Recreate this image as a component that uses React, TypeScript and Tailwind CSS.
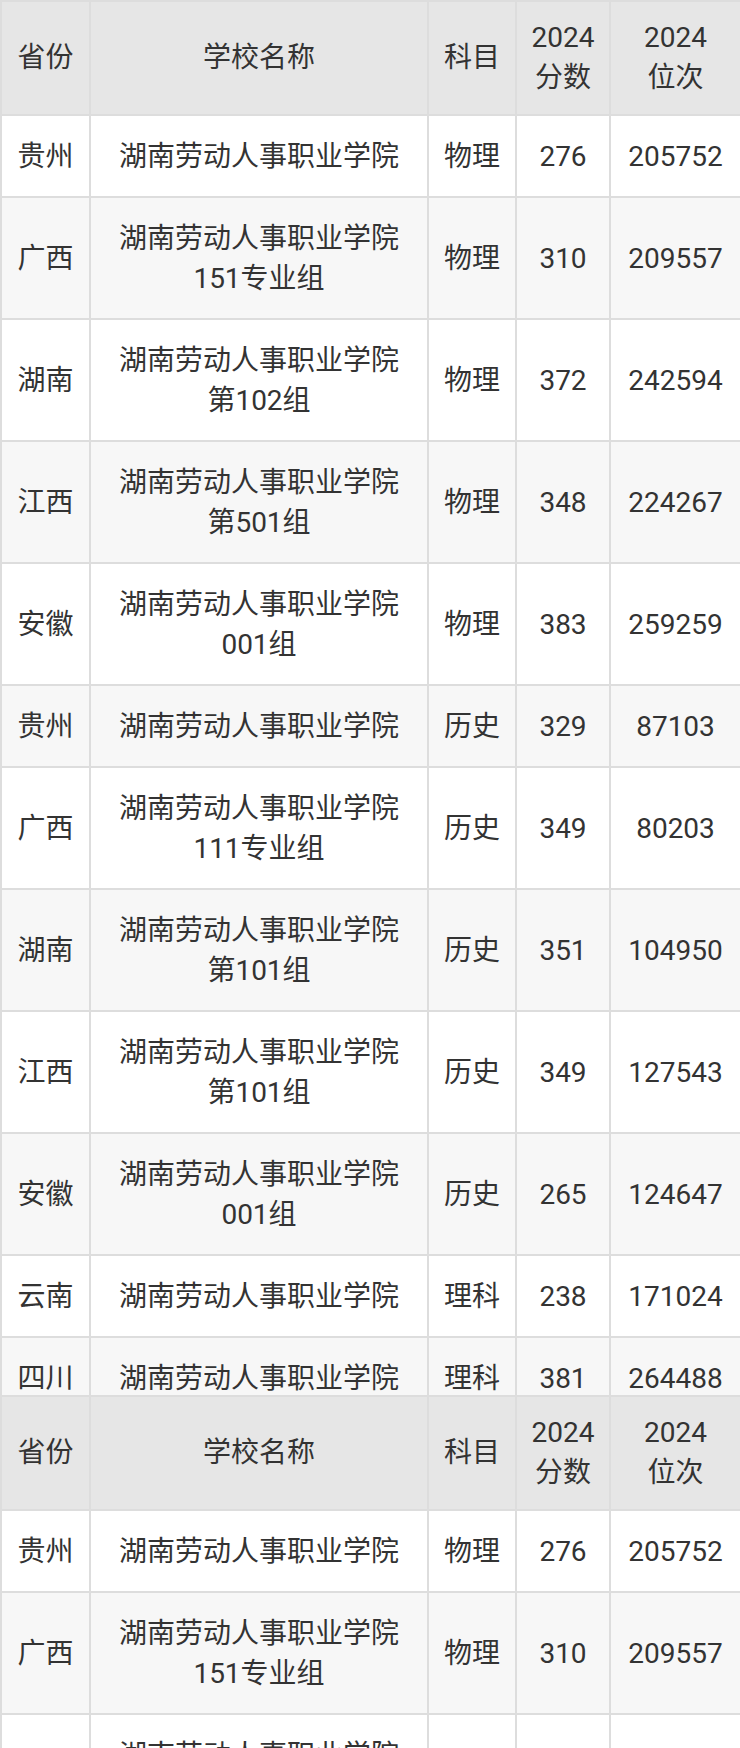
import React from "react";

type Row = {
    province: string;
    school: string;
    group?: string;
    subject: string;
    score: string;
    rank: string;
};

const SCHOOL = "湖南劳动人事职业学院";

const rows: Row[] = [
    { province: "贵州", school: SCHOOL, subject: "物理", score: "276", rank: "205752" },
    { province: "广西", school: SCHOOL, group: "151专业组", subject: "物理", score: "310", rank: "209557" },
    { province: "湖南", school: SCHOOL, group: "第102组", subject: "物理", score: "372", rank: "242594" },
    { province: "江西", school: SCHOOL, group: "第501组", subject: "物理", score: "348", rank: "224267" },
    { province: "安徽", school: SCHOOL, group: "001组", subject: "物理", score: "383", rank: "259259" },
    { province: "贵州", school: SCHOOL, subject: "历史", score: "329", rank: "87103" },
    { province: "广西", school: SCHOOL, group: "111专业组", subject: "历史", score: "349", rank: "80203" },
    { province: "湖南", school: SCHOOL, group: "第101组", subject: "历史", score: "351", rank: "104950" },
    { province: "江西", school: SCHOOL, group: "第101组", subject: "历史", score: "349", rank: "127543" },
    { province: "安徽", school: SCHOOL, group: "001组", subject: "历史", score: "265", rank: "124647" },
    { province: "云南", school: SCHOOL, subject: "理科", score: "238", rank: "171024" },
    { province: "四川", school: SCHOOL, subject: "理科", score: "381", rank: "264488" },
];

const cell = "border-2 border-[#dddddd] px-[8px] pt-[21px] pb-[19px] text-center align-middle";
const head = "border-2 border-[#dddddd] px-[8px] py-[16px] text-center align-middle font-normal";

function ScoreTable({ data }: { data: Row[] }) {
    return (
        <table className="w-[740px] table-fixed border-collapse text-[28px] leading-[40px] text-[#333333]">
            <colgroup>
                <col className="w-[89px]" />
                <col className="w-[338px]" />
                <col className="w-[88px]" />
                <col className="w-[94px]" />
                <col className="w-[131px]" />
            </colgroup>
            <thead>
                <tr className="bg-[#e6e6e6]">
                    <th className={head}>省份</th>
                    <th className={head}>学校名称</th>
                    <th className={head}>科目</th>
                    <th className={head}>
                        <span className="block">2024</span>
                        <span className="block">分数</span>
                    </th>
                    <th className={head}>
                        <span className="block">2024</span>
                        <span className="block">位次</span>
                    </th>
                </tr>
            </thead>
            <tbody>
                {data.map((r, i) => (
                    <tr key={i} className={i % 2 === 0 ? "bg-white" : "bg-[#f7f7f7]"}>
                        <td className={cell}>{r.province}</td>
                        <td className={cell}>
                            <span className="block">{r.school}</span>
                            {r.group && <span className="block">{r.group}</span>}
                        </td>
                        <td className={cell}>{r.subject}</td>
                        <td className={cell}>{r.score}</td>
                        <td className={cell}>{r.rank}</td>
                    </tr>
                ))}
            </tbody>
        </table>
    );
}

export default function App() {
    return (
        <div
            className="h-[1748px] w-[740px] overflow-hidden bg-white"
            style={{ fontFamily: "Roboto, 'Noto Sans CJK SC', sans-serif" }}
        >
            {/* scrolled table, cut off */}
            <div className="h-[1395px] overflow-hidden">
                <ScoreTable data={rows} />
            </div>
            <ScoreTable data={rows.slice(0, 3)} />
        </div>
    );
}
